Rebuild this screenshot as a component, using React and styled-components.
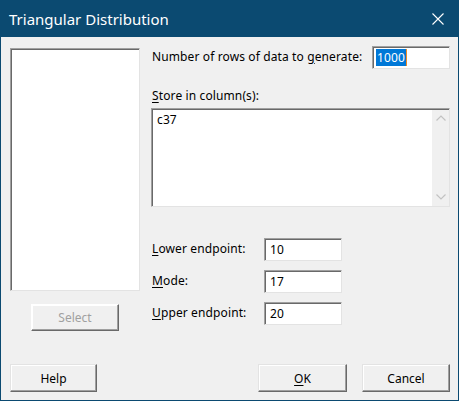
import React from "react"
import styled, { createGlobalStyle } from "styled-components"

const GlobalStyle = createGlobalStyle`
  html, body {
    margin: 0;
    padding: 0;
    background: #f0f0f0;
  }
  body {
    font-family: "Noto Sans", "Liberation Sans", sans-serif;
    font-size: 12px;
    letter-spacing: 0.12px;
    color: #000;
  }
`

const Window = styled.div`
  width: 459px;
  height: 401px;
  box-sizing: border-box;
  border: 1px solid #0b4a71;
  border-top: 0;
  display: flex;
  flex-direction: column;
  background: #f0f0f0;
`

const TitleBar = styled.div`
  height: 37px;
  flex: none;
  background: #0b4a71;
  display: flex;
  align-items: center;
  justify-content: space-between;
  padding: 0 15px 0 9px;
  color: #fff;
  font-size: 15px;
  letter-spacing: 0;
  margin: 0 -1px;
`

const Close = styled.svg`
  width: 12px;
  height: 12px;
  display: block;
`

const Body = styled.div`
  flex: 1;
  display: flex;
  flex-direction: column;
  padding: 0 8px 8px 9px;
`

const Main = styled.div`
  flex: 1;
  display: flex;
  gap: 12px;
`

const LeftCol = styled.div`
  width: 130px;
  margin-top: 11px;
  display: flex;
  flex-direction: column;
  align-items: center;
`

const ListBox = styled.div`
  width: 130px;
  height: 243px;
  box-sizing: border-box;
  background: #fff;
  border-top: 1px solid #a0a0a0;
  border-left: 1px solid #a0a0a0;
  border-right: 1px solid #e3e3e3;
  border-bottom: 1px solid #e3e3e3;
  box-shadow: inset 1px 1px 0 #696969;
`

const Button = styled.button`
  box-sizing: border-box;
  width: ${(p) => p.$w}px;
  height: ${(p) => p.$h || 28}px;
  margin: 0 0 0 ${(p) => p.$ml || 0}px;
  background: #f0f0f0;
  font: inherit;
  color: ${(p) => (p.disabled ? "#a0a0a0" : "#000")};
  border-top: 1px solid ${(p) => (p.disabled ? "#fff" : "#e3e3e3")};
  border-left: 1px solid ${(p) => (p.disabled ? "#fff" : "#e3e3e3")};
  border-right: 1px solid #696969;
  border-bottom: 1px solid #696969;
  box-shadow: inset -1px -1px 0 #a0a0a0, inset 1px 1px 0 #fff;
  padding: 0;
`

const SelectButton = styled(Button)`
  margin-top: 13px;
`

const RightCol = styled.div`
  flex: 1;
  margin-top: 9px;
  display: flex;
  flex-direction: column;
`

const Row = styled.div`
  display: flex;
  align-items: center;
  justify-content: ${(p) => (p.$spread ? "space-between" : "flex-start")};
  height: 23px;
`

const Label = styled.span`
  display: inline-block;
  width: ${(p) => (p.$w ? p.$w + "px" : "auto")};
  padding-bottom: 2px;
`

const Key = styled.u`
  text-decoration: underline;
  text-underline-offset: 2px;
`

const Input = styled.div`
  box-sizing: border-box;
  width: 78px;
  height: 23px;
  background: #fff;
  border-top: 1px solid #a0a0a0;
  border-left: 1px solid #a0a0a0;
  border-right: 1px solid #e3e3e3;
  border-bottom: 1px solid #e3e3e3;
  box-shadow: inset 1px 1px 0 #696969;
  padding: 2px 0 0 5px;
  line-height: 17px;
  display: flex;
  align-items: flex-start;
`

const Selected = styled.span`
  background: #0078d7;
  color: #fff;
  border-right: 1px solid #f08a24;
  margin-left: -2px;
  padding: 0 1px;
`

const StoreLabel = styled.div`
  margin-top: 19px;
  line-height: 16px;
`

const TextArea = styled.div`
  margin-top: 4px;
  margin-left: -1px;
  height: 99px;
  box-sizing: border-box;
  background: #fff;
  border-top: 1px solid #a0a0a0;
  border-left: 1px solid #a0a0a0;
  border-right: 1px solid #e3e3e3;
  border-bottom: 1px solid #e3e3e3;
  box-shadow: inset 1px 1px 0 #696969;
  display: flex;
`

const AreaText = styled.div`
  flex: 1;
  padding: 3px 0 0 5px;
  line-height: 16px;
`

const ScrollBar = styled.div`
  width: 17px;
  margin: 1px 0 0 0;
  background: #f0f0f0;
  display: flex;
  flex-direction: column;
  justify-content: space-between;
  align-items: center;
  padding: 5px 0 6px;
`

const Chevron = styled.svg`
  width: 10px;
  height: 6px;
  display: block;
`

const Fields = styled.div`
  margin-top: 31px;
  display: flex;
  flex-direction: column;
  gap: 9px;
`

const Footer = styled.div`
  display: flex;
  align-items: center;
`

const Spacer = styled.div`
  flex: 1;
`

const App = () => {
  return (
    <>
      <GlobalStyle />
      <Window>
        <TitleBar>
          <span>Triangular Distribution</span>
          <Close viewBox="0 0 12 12">
            <path d="M0.5 0.5 L11.5 11.5 M11.5 0.5 L0.5 11.5" stroke="#fff" strokeWidth="1.1" fill="none" />
          </Close>
        </TitleBar>
        <Body>
          <Main>
            <LeftCol>
              <ListBox />
              <SelectButton $w={88} $h={27} disabled>
                Select
              </SelectButton>
            </LeftCol>
            <RightCol>
              <Row $spread>
                <Label>
                  Number of rows of data to <Key>g</Key>enerate:
                </Label>
                <Input>
                  <Selected>1000</Selected>
                </Input>
              </Row>
              <StoreLabel>
                <Key>S</Key>tore in column(s):
              </StoreLabel>
              <TextArea>
                <AreaText>c37</AreaText>
                <ScrollBar>
                  <Chevron viewBox="0 0 10 6">
                    <path d="M0.5 5.5 L5 1 L9.5 5.5" stroke="#c2c2c2" strokeWidth="1.2" fill="none" />
                  </Chevron>
                  <Chevron viewBox="0 0 10 6">
                    <path d="M0.5 0.5 L5 5 L9.5 0.5" stroke="#c2c2c2" strokeWidth="1.2" fill="none" />
                  </Chevron>
                </ScrollBar>
              </TextArea>
              <Fields>
                <Row>
                  <Label $w={112}>
                    <Key>L</Key>ower endpoint:
                  </Label>
                  <Input>10</Input>
                </Row>
                <Row>
                  <Label $w={112}>
                    <Key>M</Key>ode:
                  </Label>
                  <Input>17</Input>
                </Row>
                <Row>
                  <Label $w={112}>
                    <Key>U</Key>pper endpoint:
                  </Label>
                  <Input>20</Input>
                </Row>
              </Fields>
            </RightCol>
          </Main>
          <Footer>
            <Button $w={87}>Help</Button>
            <Spacer />
            <Button $w={89}>
              <Key>O</Key>K
            </Button>
            <Button $w={88} $ml={15}>
              Cancel
            </Button>
          </Footer>
        </Body>
      </Window>
    </>
  )
}

export default App
